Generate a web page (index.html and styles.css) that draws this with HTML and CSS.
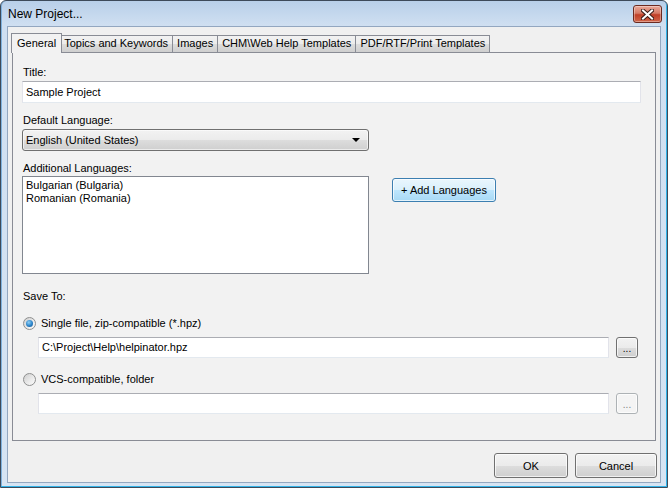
FILE: index.html
```html
<!DOCTYPE html>
<html lang="en">
<head>
  <meta charset="UTF-8" />
  <title>New Project...</title>
  <link rel="stylesheet" href="styles.css">
</head>
<body>

<div class="window">
  <!-- Caption -->
  <div class="titlebar">
    <span class="caption">New Project...</span>
    <div class="close-btn">
      <svg width="13" height="11" viewBox="0 0 13 11">
        <path d="M2 1.5 L11 9.5 M11 1.5 L2 9.5" stroke="#3a1d18" stroke-width="4" stroke-linecap="square" fill="none"/>
        <path d="M2 1.5 L11 9.5 M11 1.5 L2 9.5" stroke="#fff" stroke-width="2" stroke-linecap="square" fill="none"/>
      </svg>
    </div>
  </div>

  <div class="client">
    <!-- Tabs -->
    <div class="tabs">
      <div class="tab active">General</div>
      <div class="tab">Topics and Keywords</div>
      <div class="tab">Images</div>
      <div class="tab">CHM\Web Help Templates</div>
      <div class="tab">PDF/RTF/Print Templates</div>
    </div>

    <div class="panel">
      <div class="label first">Title:</div>
      <div class="edit title-edit">Sample Project</div>

      <div class="label">Default Language:</div>
      <div class="combo">
        <span>English (United States)</span>
        <span class="arrow"></span>
      </div>

      <div class="label list-label">Additional Languages:</div>
      <div class="lang-row">
        <div class="listbox">
          <div>Bulgarian (Bulgaria)</div>
          <div>Romanian (Romania)</div>
        </div>
        <div class="btn btn-focus add-btn">+ Add Languages</div>
      </div>

      <div class="label save-label">Save To:</div>

      <div class="radio-row">
        <span class="radio checked"></span>
        <span>Single file, zip-compatible (*.hpz)</span>
      </div>
      <div class="path-row">
        <div class="edit path">C:\Project\Help\helpinator.hpz</div>
        <div class="browse">...</div>
      </div>

      <div class="radio-row second">
        <span class="radio"></span>
        <span>VCS-compatible, folder</span>
      </div>
      <div class="path-row">
        <div class="edit path"></div>
        <div class="browse disabled">...</div>
      </div>
    </div>

    <!-- Dialog buttons -->
    <div class="footer">
      <div class="btn ok-btn">OK</div>
      <div class="btn cancel-btn">Cancel</div>
    </div>
  </div>
</div>

</body>
</html>
```

FILE: styles.css
```css
* {
  box-sizing: border-box;
}

html, body {
  margin: 0;
  padding: 0;
  width: 668px;
  height: 488px;
  overflow: hidden;
  font-family: 'Liberation Sans', Arial, sans-serif;
  font-size: 11px;
  color: #000;
  background: #fff;
}

.window {
  width: 668px;
  height: 488px;
  border: 1px solid #3d4a5a;
  border-radius: 6px 6px 0 0;
  background: linear-gradient(#b8cfe9, #cfdff1 24px, #d6e4f3);
  box-shadow: inset -1px -1px 0 #32b3e8, inset 1px 0 0 #7fb2de;
  padding: 0 6px 4px 6px;
  display: flex;
  flex-direction: column;
}

/* caption bar */
.titlebar {
  height: 25px;
  display: flex;
  align-items: flex-start;
  justify-content: space-between;
}

.caption {
  font-size: 12px;
  padding: 6px 0 0 1px;
  color: #000;
}

.close-btn {
  width: 29px;
  height: 18px;
  margin-top: 4px;
  margin-right: -1px;
  border: 1px solid #6b2a20;
  border-radius: 3px;
  background: linear-gradient(#e9a899, #d57a66 45%, #c13f27 55%, #d0664a);
  box-shadow: inset 0 0 0 1px rgba(255, 255, 255, 0.35);
  display: flex;
  align-items: center;
  justify-content: center;
}

.client {
  flex: 1;
  background: #f0f0f0;
  border: 1px solid #93a7c0;
  padding: 6px 0 0 4px;
  display: flex;
  flex-direction: column;
}

/* tabs */
.tabs {
  display: flex;
  align-items: flex-end;
  height: 20px;
  margin-bottom: -1px;
  padding-left: 1px;
  position: relative;
  z-index: 1;
}

.tab {
  height: 17px;
  margin-bottom: 1px;
  margin-left: -1px;
  padding: 0 4px;
  line-height: 15px;
  border: 1px solid #898c95;
  border-bottom: none;
  background: linear-gradient(#f2f2f2, #ebebeb 50%, #dcdcdc 51%, #cfcfcf);
  white-space: nowrap;
}

.tab.active {
  height: 20px;
  margin: 0 -2px 0 -2px;
  padding: 0 5px;
  line-height: 19px;
  background: #f2f2f2;
  position: relative;
  z-index: 2;
}

.panel {
  width: 644px;
  height: 389px;
  border: 1px solid #898c95;
  background: #f2f2f2;
  padding: 0 14px 0 9px;
}

.label {
  line-height: 14px;
  padding-left: 1px;
  margin-top: 10px;
}

.label.first {
  margin-top: 12px;
}

.label.list-label {
  margin-top: 10px;
}

.label.save-label {
  margin-top: 15px;
}

.edit {
  height: 22px;
  margin-top: 2px;
  padding: 0 3px;
  line-height: 20px;
  background: #fff;
  border: 1px solid #e2e3ea;
  border-top-color: #abadb3;
  border-bottom-color: #e3e9ef;
  white-space: nowrap;
}

.combo {
  width: 347px;
  height: 22px;
  margin-top: 2px;
  padding: 0 8px 0 3px;
  border: 1px solid #707070;
  border-radius: 3px;
  background: linear-gradient(#f2f2f2, #ebebeb 50%, #dddddd 51%, #cfcfcf);
  box-shadow: inset 0 0 0 1px rgba(255, 255, 255, 0.6);
  display: flex;
  align-items: center;
  justify-content: space-between;
}

.arrow {
  width: 0;
  height: 0;
  border-left: 4px solid transparent;
  border-right: 4px solid transparent;
  border-top: 4px solid #000;
}

.lang-row {
  display: flex;
  align-items: flex-start;
  margin-top: 1px;
}

.listbox {
  width: 347px;
  height: 98px;
  border: 1px solid #828790;
  background: #fff;
  padding: 2px 3px;
  line-height: 13px;
}

.btn {
  border: 1px solid #707070;
  border-radius: 3px;
  background: linear-gradient(#f2f2f2, #ebebeb 50%, #dddddd 51%, #cfcfcf);
  box-shadow: inset 0 0 0 1px rgba(255, 255, 255, 0.7);
  display: flex;
  align-items: center;
  justify-content: center;
  white-space: nowrap;
}

.btn-focus {
  border-color: #3c7fb1;
  background: linear-gradient(#eaf6fd, #d9f0fc 50%, #bee6fd 51%, #a7d9f5);
}

.add-btn {
  width: 104px;
  height: 24px;
  margin: 2px 0 0 23px;
}

.radio-row {
  display: flex;
  align-items: center;
  height: 14px;
  margin-top: 13px;
  padding-left: 1px;
  gap: 5px;
}

.radio-row.second {
  margin-top: 14px;
}

.radio {
  width: 13px;
  height: 13px;
  border-radius: 50%;
  border: 1px solid #8e8f8f;
  background: linear-gradient(135deg, #cfcfcf, #ececec 60%, #fafafa);
  position: relative;
}

.radio.checked::after {
  content: "";
  position: absolute;
  left: 2px;
  top: 2px;
  width: 7px;
  height: 7px;
  border-radius: 50%;
  background: radial-gradient(circle at 40% 35%, #8fd0f6, #2a82c8 55%, #124f86);
}

.path-row {
  display: flex;
  align-items: flex-start;
  margin-top: 7px;
  padding-left: 16px;
}

.edit.path {
  width: 571px;
  height: 21px;
  margin-top: 0;
  line-height: 19px;
}

.browse {
  width: 22px;
  height: 21px;
  margin-left: 7px;
  border: 1px solid #707070;
  border-radius: 3px;
  background: linear-gradient(#f2f2f2, #ebebeb 50%, #dddddd 51%, #cfcfcf);
  box-shadow: inset 0 0 0 1px rgba(255, 255, 255, 0.7);
  text-align: center;
  line-height: 22px;
  font-size: 10px;
}

.browse.disabled {
  border-color: #adb2b5;
  background: #f4f4f4;
  color: #838383;
}

.footer {
  display: flex;
  justify-content: flex-end;
  gap: 7px;
  padding: 12px 3px 0 0;
}

.ok-btn {
  width: 74px;
  height: 25px;
}

.cancel-btn {
  width: 82px;
  height: 25px;
}
```
